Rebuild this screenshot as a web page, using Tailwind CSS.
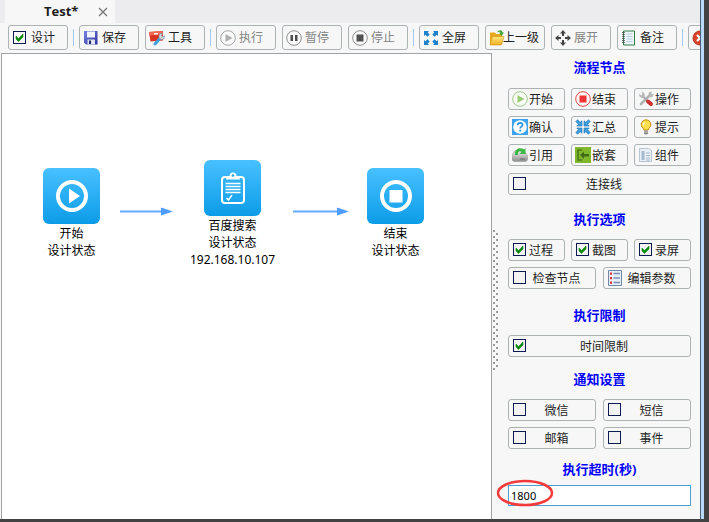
<!DOCTYPE html>
<html lang="zh-CN">
<head>
<meta charset="utf-8">
<meta name="viewport" content="width=device-width, initial-scale=1">
<title>Test*</title>
<script src="https://cdn.jsdelivr.net/npm/@tailwindcss/browser@4"></script>
</head>
<body class="flex h-screen flex-col overflow-hidden bg-[#424242] pr-[5px] pb-[3px] font-['Noto_Sans','Noto_Sans_CJK_SC',sans-serif] text-[12px] leading-[17px] text-[#1e1e1e]">

<svg width="0" height="0" class="absolute" aria-hidden="true">
  <defs>
    <linearGradient id="tile" x1="0" y1="0" x2="0" y2="1"><stop offset="0" stop-color="#48c0ff"/><stop offset="1" stop-color="#0c9ce8"/></linearGradient>
    <linearGradient id="floppy" x1="0" y1="0" x2="1" y2="1"><stop offset="0" stop-color="#7a86e0"/><stop offset="1" stop-color="#2a2f9c"/></linearGradient>
    <linearGradient id="folder" x1="0" y1="0" x2="0" y2="1"><stop offset="0" stop-color="#ffe680"/><stop offset="1" stop-color="#f0b020"/></linearGradient>
    <linearGradient id="silver" x1="0" y1="0" x2="0" y2="1"><stop offset="0" stop-color="#f2f2f2"/><stop offset="1" stop-color="#8c8c8c"/></linearGradient>
    <symbol id="tick" viewBox="0 0 13 13"><path d="M3 5v3l2.500 2.500L10 6V3L5.500 7.500z" fill="#0c8a0c" stroke="#0c8a0c" stroke-width=".6"/></symbol>
  </defs>
</svg>

<div class="flex min-h-0 flex-1 flex-col overflow-hidden border-r-3 border-[#b9d9fa] bg-[#f7f7f7]">
<div class="flex min-h-0 flex-1 flex-col overflow-hidden border-r border-[#4b6078]">

  <header class="flex h-[23px] shrink-0 bg-[#ececee] pl-[5px]">
    <div class="flex w-[110px] items-center justify-between bg-[#f7f7f7] pr-[7px] pl-[39px]">
      <span class="font-['Open_Sans',sans-serif] text-[13px] font-bold">Test*</span>
      <button aria-label="关闭" class="size-[10px]"><svg viewBox="0 0 10 10" class="size-[10px]" stroke="#777" stroke-width="1.300"><path d="M1 1l8 8M9 1l-8 8"/></svg></button>
    </div>
  </header>

  <nav class="flex h-[30px] shrink-0 items-start overflow-hidden pt-[2px] pl-2">
    <div class="flex shrink-0 gap-1.5">
      <label class="flex h-[25px] w-[60px] items-center gap-[3px] rounded-[3px] border border-[#adb2b5] pl-[3px]">
        <span class="grid size-4 place-content-start pt-px pl-px"><input type="checkbox" checked class="peer col-start-1 row-start-1 size-[13px] appearance-none border border-[#0c1c50] bg-[#f8f8f8]"><svg class="pointer-events-none invisible col-start-1 row-start-1 size-[13px] peer-checked:visible"><use href="#tick"/></svg></span>
        设计</label>
    </div>
    <div class="mx-[5px] mt-1 h-[17px] w-px shrink-0 bg-[#a5c8f0]"></div>
    <div class="flex shrink-0 gap-1.5">
      <button class="flex h-[25px] w-[60px] items-center gap-[3px] rounded-[3px] border border-[#adb2b5] pl-[3px]">
        <svg class="size-4" viewBox="0 0 16 16"><path d="M1 1h13.500v13.500H3L1 12.500z" fill="url(#floppy)"/><path d="M4 1.500h8v6H4z" fill="#f1f4fc"/><path d="M4.500 9.500h7.500v5H4.500z" fill="#dfe3f2"/><path d="M6 10.500h2v3.500H6z" fill="#24286c"/></svg>
        保存</button>
      <button class="flex h-[25px] w-[60px] items-center gap-[3px] rounded-[3px] border border-[#adb2b5] pl-[3px]">
        <svg class="size-4" viewBox="0 0 16 16"><path d="M0 2l14-1v9.500L1.500 11.500z" fill="#d93424"/><path d="M0 2l14-1v3L.4 5.500z" fill="#ee6a55"/><path d="M5 3h4v1.500H5z" fill="#fff"/><path d="M10.500 9L6 14" stroke="#3fa0de" stroke-width="3" stroke-linecap="round"/><path d="M10 5a3 3 0 0 1 3.500-1.500l-1 2 1.300 1.300 2-1a3 3 0 0 1-4.300 3.400L10 8z" fill="#c8d0d8" stroke="#838d98" stroke-width=".6"/></svg>
        工具</button>
    </div>
    <div class="mx-[5px] mt-1 h-[17px] w-px shrink-0 bg-[#a5c8f0]"></div>
    <div class="flex shrink-0 gap-1.5 text-[#858585]">
      <button class="flex h-[25px] w-[60px] items-center gap-[3px] rounded-[3px] border border-[#adb2b5] pl-[3px]">
        <svg class="size-4" viewBox="0 0 16 16"><circle cx="8" cy="8" r="7.300" fill="#fafafa" stroke="#a6a6a6"/><path d="M5.500 4l7 4-7 4z" fill="#b0b0b0"/></svg>
        执行</button>
      <button class="flex h-[25px] w-[60px] items-center gap-[3px] rounded-[3px] border border-[#adb2b5] pl-[3px]">
        <svg class="size-4" viewBox="0 0 16 16"><circle cx="8" cy="8" r="7.300" fill="#fafafa" stroke="#8f8f8f"/><path d="M4.500 5H7v6H4.500zM9 5h2.500v6H9z" fill="#4c4c4c"/></svg>
        暂停</button>
      <button class="flex h-[25px] w-[60px] items-center gap-[3px] rounded-[3px] border border-[#adb2b5] pl-[3px]">
        <svg class="size-4" viewBox="0 0 16 16"><circle cx="8" cy="8" r="7.300" fill="#fafafa" stroke="#8f8f8f"/><path d="M4.500 4.500h7v7h-7z" fill="#505050"/></svg>
        停止</button>
    </div>
    <div class="mx-[5px] mt-1 h-[17px] w-px shrink-0 bg-[#a5c8f0]"></div>
    <div class="flex shrink-0 gap-1.5">
      <button class="flex h-[25px] w-[60px] items-center gap-[3px] rounded-[3px] border border-[#adb2b5] pl-[3px]">
        <svg class="size-4" viewBox="0 0 16 16" fill="#1f80cc"><path id="corner" d="M1 1h5L4.700 2.300 6.700 4.500 4.500 6.700 2.300 4.700 1 6z"/><use href="#corner" transform="matrix(-1 0 0 1 16 0)"/><use href="#corner" transform="matrix(1 0 0 -1 0 16)"/><use href="#corner" transform="matrix(-1 0 0 -1 16 16)"/></svg>
        全屏</button>
      <button class="flex h-[25px] w-[60px] items-center rounded-[3px] border border-[#adb2b5] pl-[3px]">
        <svg class="size-4 shrink-0" viewBox="0 0 16 16"><path d="M1 2.500h5l1 1.500h6V14H1z" fill="#e5a91c"/><path d="M3.500 6.500H15l-2.500 8.500H1z" fill="url(#folder)" stroke="#cf9518" stroke-width=".6"/><path d="M8 2.500C9.500-.5 13-.5 13.500 2.500H15L12.500 6 10 2.500h1.500C11 1.500 9.500 1.500 8 2.500z" fill="#3fa535"/></svg>
        <span class="-ml-0.5 whitespace-nowrap">上一级</span></button>
      <button class="flex h-[25px] w-[60px] items-center gap-[3px] rounded-[3px] border border-[#adb2b5] pl-[3px] text-[#858585]">
        <svg class="size-4" viewBox="0 0 16 16" fill="#444"><path id="up" d="M8 0l3 3.500H9V6H7V3.500H5z"/><use href="#up" transform="rotate(90 8 8)"/><use href="#up" transform="rotate(180 8 8)"/><use href="#up" transform="rotate(270 8 8)"/></svg>
        展开</button>
      <button class="flex h-[25px] w-[60px] items-center gap-[3px] rounded-[3px] border border-[#adb2b5] pl-[3px]">
        <svg class="size-4" viewBox="0 0 16 16"><path d="M2.500 1h11v14h-11z" fill="#eef5fb" stroke="#2d7d46"/><path d="M5.500 4h6M5.500 6.500h6M5.500 9h6M5.500 11.500h6" stroke="#b4cbdc"/><path d="M1 2.500h3M1 4.500h3M1 6.500h3M1 8.500h3M1 10.500h3M1 12.500h3" stroke="#555" stroke-width=".8"/></svg>
        备注</button>
    </div>
    <div class="mx-[5px] mt-1 h-[17px] w-px shrink-0 bg-[#a5c8f0]"></div>
    <button aria-label="关闭" class="flex h-[25px] w-[60px] shrink-0 items-center rounded-[3px] border border-[#adb2b5] pl-[3px]">
      <svg class="size-4" viewBox="0 0 16 16"><circle cx="8" cy="8" r="7" fill="#d8432a" stroke="#b83420"/><path d="M5 5l6 6M11 5l-6 6" stroke="#fff" stroke-width="2.200"/></svg>
    </button>
  </nav>

  <div class="flex min-h-0 flex-1 pl-px">
    <main class="relative min-w-0 flex-1 overflow-hidden border border-b-0 border-[#a0a3a6] bg-white text-center text-black">
      <div class="absolute top-[114px] left-[41px] flex w-[57px] flex-col items-center whitespace-nowrap">
        <svg class="mb-px h-14 w-[57px]" viewBox="0 0 57 56"><rect width="57" height="56" rx="6" fill="url(#tile)"/><circle cx="29" cy="28" r="14" fill="none" stroke="#fff" stroke-width="4"/><path d="M26 20.500L37 28l-11 7.500z" fill="#fff"/></svg>
        <span>开始</span><span>设计状态</span>
      </div>
      <svg class="absolute top-[152px] left-[118px] h-[10px] w-[53px]" viewBox="0 0 53 10"><path d="M0 5.500h42" stroke="#64aaff" stroke-width="2"/><path d="M41 1.500l12 4-12 4z" fill="#4d9dff"/></svg>
      <div class="absolute top-[106px] left-[202px] flex w-[57px] flex-col items-center whitespace-nowrap">
        <svg class="mb-px h-14 w-[57px]" viewBox="0 0 57 56"><rect width="57" height="56" rx="6" fill="url(#tile)"/><rect x="18" y="17" width="22" height="26" rx="3" fill="none" stroke="#fff" stroke-width="2"/><path d="M22 19.500c0-2.500 2-3.500 3.500-3.500a3.500 3.500 0 0 1 7 0c1.500 0 3.500 1 3.500 3.500z" fill="#fff"/><circle cx="29" cy="15.500" r="1.300" fill="#24aaf2"/><path d="M21.500 23.500h15M21.500 26.500h15M21.500 29.500h15M21.500 32.500h15" stroke="#fff" stroke-width="1.500"/><path d="M22.500 38l2 2 3.500-5" fill="none" stroke="#fff" stroke-width="1.500"/></svg>
        <span>百度搜索</span><span>设计状态</span><span>192.168.10.107</span>
      </div>
      <svg class="absolute top-[152px] left-[291px] h-[10px] w-[56px]" viewBox="0 0 56 10"><path d="M0 5.500h45" stroke="#64aaff" stroke-width="2"/><path d="M44 1.500l12 4-12 4z" fill="#4d9dff"/></svg>
      <div class="absolute top-[114px] left-[365px] flex w-[57px] flex-col items-center whitespace-nowrap">
        <svg class="mb-px h-14 w-[57px]" viewBox="0 0 57 56"><rect width="57" height="56" rx="6" fill="url(#tile)"/><circle cx="29" cy="28" r="14" fill="none" stroke="#fff" stroke-width="4"/><path d="M22.500 22h13v12.500h-13z" fill="#fff"/></svg>
        <span>结束</span><span>设计状态</span>
      </div>
    </main>

    <div class="w-4 shrink-0 pt-[177px] pl-px">
      <svg class="h-[140px] w-[6px]"><defs><pattern id="grip" width="6" height="6" patternUnits="userSpaceOnUse"><path d="M0 0h2v2H0zM3 3h2v2H3z" fill="#9a9a9a"/></pattern></defs><rect width="6" height="140" fill="url(#grip)"/></svg>
    </div>

    <aside class="w-48 shrink-0 pt-1 pr-[9px]">
      <section>
        <h2 class="mb-[11px] text-center text-[13px] leading-5 font-bold text-[#0000fa]">流程节点</h2>
        <div class="grid grid-cols-3 gap-1.5">
          <button class="flex h-[22px] items-center gap-px rounded-[3px] border border-[#adb2b5] pl-[3px]"><svg class="size-4" viewBox="0 0 16 16"><circle cx="8" cy="8" r="7.300" fill="#fbfdf9" stroke="#9cc98a"/><path d="M5.500 4l7 4-7 4z" fill="#97cf72"/></svg>开始</button>
          <button class="flex h-[22px] items-center gap-px rounded-[3px] border border-[#adb2b5] pl-[3px]"><svg class="size-4" viewBox="0 0 16 16"><circle cx="8" cy="8" r="7.300" fill="#fff7f7" stroke="#e04848"/><path d="M4.500 4.500h7v7h-7z" fill="#f03434"/></svg>结束</button>
          <button class="flex h-[22px] items-center gap-px rounded-[3px] border border-[#adb2b5] pl-[3px]"><svg class="size-4" viewBox="0 0 16 16"><path d="M12.500 3.500L3 13" stroke="#b4b4b4" stroke-width="2.600" stroke-linecap="round"/><path d="M4.500 5l5 5" stroke="#aaa" stroke-width="2"/><path d="M10 10.500l3 2.500" stroke="#cc3030" stroke-width="4" stroke-linecap="round"/><path d="M1 3l2.500 1.500L4.500 2 3 .8a3.500 3.500 0 0 1 3.500 5L4.500 7A3.500 3.500 0 0 1 1 3zM11 1l3-.5-1 2 1 1 2-.5-1.500 3-3 .5-1-2z" fill="#b8b8b8"/></svg>操作</button>
          <button class="flex h-[22px] items-center gap-px rounded-[3px] border border-[#adb2b5] pl-[3px]"><svg class="size-4" viewBox="0 0 16 16"><path d="M0 0h16v16H0z" fill="#3ba3ee"/><circle cx="8" cy="8" r="6.800" fill="#fff"/><path d="M5.700 6.300c0-3.300 4.800-3 4.800-.3 0 1.700-2.300 1.700-2.300 3.500" fill="none" stroke="#2390e0" stroke-width="1.700"/><path d="M7.300 10.700h1.900v1.800H7.300z" fill="#2390e0"/></svg>确认</button>
          <button class="flex h-[22px] items-center gap-px rounded-[3px] border border-[#adb2b5] pl-[3px]"><svg class="size-4" viewBox="0 0 16 16" fill="#3d9fe0" stroke="#1c6eae" stroke-width=".6"><path id="inward" d="M.8 2.500L2.500.8l2.700 2.500L7 1.800V7H1.800l1.600-1.700z"/><use href="#inward" transform="matrix(-1 0 0 1 16 0)"/><use href="#inward" transform="matrix(1 0 0 -1 0 16)"/><use href="#inward" transform="matrix(-1 0 0 -1 16 16)"/></svg>汇总</button>
          <button class="flex h-[22px] items-center gap-px rounded-[3px] border border-[#adb2b5] pl-[3px]"><svg class="size-4" viewBox="0 0 16 16"><path d="M8 .8a4.700 4.700 0 0 1 3 8.400c-.7.600-.8 1-.8 1.800H5.800c0-.8-.1-1.200-.8-1.800A4.700 4.700 0 0 1 8 .8z" fill="#ffe04a" stroke="#c98f10"/><path d="M6.500 3.500Q5 4.500 5.500 6.500" fill="none" stroke="#fff" stroke-width="1.300"/><path d="M6 11.500h4v3l-1 1H7l-1-1z" fill="#8d8d8d"/><path d="M6 13h4" stroke="#ddd" stroke-width=".7"/></svg>提示</button>
          <button class="flex h-[22px] items-center gap-px rounded-[3px] border border-[#adb2b5] pl-[3px]"><svg class="size-4" viewBox="0 0 16 16"><path d="M0 8.500l3-5h9l3.500 5V13l-1.500 1.500H2L0 13z" fill="url(#silver)" stroke="#9a9a9a" stroke-width=".6"/><path d="M8 12h5" stroke="#666"/><path d="M3 8C2 2 8-.5 12 2.500L13.500 1v6h-6l2-2C8 3.500 5.500 4.500 6 8z" fill="#3db843"/></svg>引用</button>
          <button class="flex h-[22px] items-center gap-px rounded-[3px] border border-[#adb2b5] pl-[3px]"><svg class="size-4" viewBox="0 0 16 16"><path d="M0 0h16v16H0z" fill="#7fb82a"/><path d="M7 3H3v10h4" fill="none" stroke="#4d7a1c" stroke-width="1.600"/><path d="M5 8l4-3.500V7h5v2.500H9V12z" fill="#416b16"/></svg>嵌套</button>
          <button class="flex h-[22px] items-center gap-px rounded-[3px] border border-[#adb2b5] pl-[3px]"><svg class="size-4" viewBox="0 0 16 16"><path d="M1.500 1.500h9l3 2v11h-12z" fill="#e9eff5" stroke="#b8c6d4"/><path d="M3.500 4h3v9h-3z" fill="#a6bace"/><path d="M8 6h4M8 8.500h4M8 11h4M8 13h4" stroke="#a6bace"/></svg>组件</button>
        </div>
        <label class="mt-[7px] flex h-[22px] items-center rounded-[3px] border border-[#adb2b5] pr-[10px] pl-[3px]"><span class="grid size-4 place-content-start pt-px pl-px"><input type="checkbox" class="peer col-start-1 row-start-1 size-[13px] appearance-none border border-[#0c1c50] bg-[#f3f3f3]"><svg class="pointer-events-none invisible col-start-1 row-start-1 size-[13px] peer-checked:visible"><use href="#tick"/></svg></span><span class="flex-1 text-center">连接线</span></label>
      </section>

      <section class="mt-3.5">
        <h2 class="mb-2.5 text-center text-[13px] leading-5 font-bold text-[#0000fa]">执行选项</h2>
        <div class="grid grid-cols-3 gap-1.5">
          <label class="flex h-[22px] items-center gap-px rounded-[3px] border border-[#adb2b5] pl-[3px]"><span class="grid size-4 place-content-start pt-px pl-px"><input type="checkbox" checked class="peer col-start-1 row-start-1 size-[13px] appearance-none border border-[#0c1c50] bg-[#f3f3f3]"><svg class="pointer-events-none invisible col-start-1 row-start-1 size-[13px] peer-checked:visible"><use href="#tick"/></svg></span>过程</label>
          <label class="flex h-[22px] items-center gap-px rounded-[3px] border border-[#adb2b5] pl-[3px]"><span class="grid size-4 place-content-start pt-px pl-px"><input type="checkbox" checked class="peer col-start-1 row-start-1 size-[13px] appearance-none border border-[#0c1c50] bg-[#f3f3f3]"><svg class="pointer-events-none invisible col-start-1 row-start-1 size-[13px] peer-checked:visible"><use href="#tick"/></svg></span>截图</label>
          <label class="flex h-[22px] items-center gap-px rounded-[3px] border border-[#adb2b5] pl-[3px]"><span class="grid size-4 place-content-start pt-px pl-px"><input type="checkbox" checked class="peer col-start-1 row-start-1 size-[13px] appearance-none border border-[#0c1c50] bg-[#f3f3f3]"><svg class="pointer-events-none invisible col-start-1 row-start-1 size-[13px] peer-checked:visible"><use href="#tick"/></svg></span>录屏</label>
        </div>
        <div class="mt-1.5 grid grid-cols-2 gap-[7px]">
          <label class="flex h-[22px] items-center rounded-[3px] border border-[#adb2b5] pr-[10px] pl-[3px]"><span class="grid size-4 place-content-start pt-px pl-px"><input type="checkbox" class="peer col-start-1 row-start-1 size-[13px] appearance-none border border-[#0c1c50] bg-[#f3f3f3]"><svg class="pointer-events-none invisible col-start-1 row-start-1 size-[13px] peer-checked:visible"><use href="#tick"/></svg></span><span class="flex-1 text-center">检查节点</span></label>
          <button class="flex h-[22px] items-center rounded-[3px] border border-[#adb2b5] pr-[10px] pl-[3px]"><svg class="size-4" viewBox="0 0 16 16"><path d="M1.500.5h13v15h-13z" fill="#e6eef8" stroke="#7088a8"/><path d="M6.500 3.500h6.500M6.500 8h6.500M6.500 12.500h6.500" stroke="#7890b0" stroke-width="1.300"/><path d="M3 2.500h2v2.300H3zM3 7h2v2.300H3zM3 11.500h2v2.300H3z" fill="#e03030"/></svg><span class="flex-1 text-center">编辑参数</span></button>
        </div>
      </section>

      <section class="mt-4">
        <h2 class="mb-2.5 text-center text-[13px] leading-5 font-bold text-[#0000fa]">执行限制</h2>
        <label class="flex h-[22px] items-center rounded-[3px] border border-[#adb2b5] pr-[10px] pl-[3px]"><span class="grid size-4 place-content-start pt-px pl-px"><input type="checkbox" checked class="peer col-start-1 row-start-1 size-[13px] appearance-none border border-[#0c1c50] bg-[#f3f3f3]"><svg class="pointer-events-none invisible col-start-1 row-start-1 size-[13px] peer-checked:visible"><use href="#tick"/></svg></span><span class="flex-1 text-center">时间限制</span></label>
      </section>

      <section class="mt-3">
        <h2 class="mb-2.5 text-center text-[13px] leading-5 font-bold text-[#0000fa]">通知设置</h2>
        <div class="grid grid-cols-2 gap-x-[7px] gap-y-1.5">
          <label class="flex h-[22px] items-center rounded-[3px] border border-[#adb2b5] pr-[10px] pl-[3px]"><span class="grid size-4 place-content-start pt-px pl-px"><input type="checkbox" class="peer col-start-1 row-start-1 size-[13px] appearance-none border border-[#0c1c50] bg-[#f3f3f3]"><svg class="pointer-events-none invisible col-start-1 row-start-1 size-[13px] peer-checked:visible"><use href="#tick"/></svg></span><span class="flex-1 text-center">微信</span></label>
          <label class="flex h-[22px] items-center rounded-[3px] border border-[#adb2b5] pr-[10px] pl-[3px]"><span class="grid size-4 place-content-start pt-px pl-px"><input type="checkbox" class="peer col-start-1 row-start-1 size-[13px] appearance-none border border-[#0c1c50] bg-[#f3f3f3]"><svg class="pointer-events-none invisible col-start-1 row-start-1 size-[13px] peer-checked:visible"><use href="#tick"/></svg></span><span class="flex-1 text-center">短信</span></label>
          <label class="flex h-[22px] items-center rounded-[3px] border border-[#adb2b5] pr-[10px] pl-[3px]"><span class="grid size-4 place-content-start pt-px pl-px"><input type="checkbox" class="peer col-start-1 row-start-1 size-[13px] appearance-none border border-[#0c1c50] bg-[#f3f3f3]"><svg class="pointer-events-none invisible col-start-1 row-start-1 size-[13px] peer-checked:visible"><use href="#tick"/></svg></span><span class="flex-1 text-center">邮箱</span></label>
          <label class="flex h-[22px] items-center rounded-[3px] border border-[#adb2b5] pr-[10px] pl-[3px]"><span class="grid size-4 place-content-start pt-px pl-px"><input type="checkbox" class="peer col-start-1 row-start-1 size-[13px] appearance-none border border-[#0c1c50] bg-[#f3f3f3]"><svg class="pointer-events-none invisible col-start-1 row-start-1 size-[13px] peer-checked:visible"><use href="#tick"/></svg></span><span class="flex-1 text-center">事件</span></label>
        </div>
      </section>

      <section class="mt-2.5">
        <label for="timeout" class="mb-1.5 block text-center text-[13px] leading-5 font-bold text-[#0000fa]">执行超时(秒)</label>
        <div class="relative">
          <input id="timeout" type="text" value="1800" class="block h-[21px] w-full border border-[#4c9fd0] bg-white px-[2px] text-[11px] text-black">
          <svg class="pointer-events-none absolute -top-[6px] -left-[12px] h-[28px] w-[58px]" viewBox="0 0 58 28"><ellipse cx="29" cy="14" rx="27" ry="12" fill="none" stroke="#f23a3a" stroke-width="2.500"/></svg>
        </div>
      </section>
    </aside>
  </div>
</div>
</div>
</body>
</html>
